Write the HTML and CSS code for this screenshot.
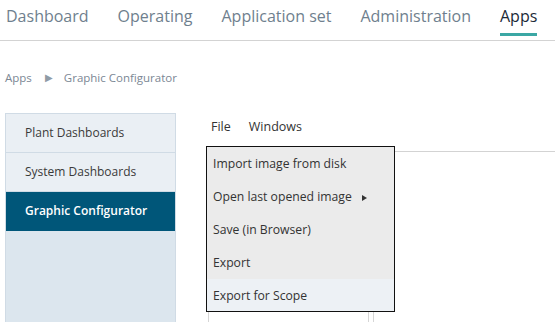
FILE: index.html
```html
<!DOCTYPE html>
<html lang="en">
<head>
<meta charset="utf-8">
<title>Graphic Configurator</title>
<link rel="stylesheet" href="styles.css">
</head>
<body>
<header class="topnav">
  <a class="nav-item">Dashboard</a>
  <a class="nav-item">Operating</a>
  <a class="nav-item">Application set</a>
  <a class="nav-item">Administration</a>
  <a class="nav-item active">Apps</a>
</header>
<nav class="breadcrumb">
  <span>Apps</span>
  <span class="crumb-sep">&#9654;</span>
  <span>Graphic Configurator</span>
</nav>
<div class="main">
  <aside class="sidebar">
    <div class="side-item">Plant Dashboards</div>
    <div class="side-item">System Dashboards</div>
    <div class="side-item active">Graphic Configurator</div>
  </aside>
  <section class="workspace">
    <div class="menubar">
      <span class="menu-title">File</span>
      <span class="menu-title">Windows</span>
    </div>
    <div class="canvas-area">
      <div class="panels">
        <div class="panel panel-a"></div>
        <div class="panel panel-b"></div>
      </div>
      <ul class="dropdown">
        <li class="dd-item">Import image from disk</li>
        <li class="dd-item">Open last opened image <span class="dd-arrow"></span></li>
        <li class="dd-item">Save (in Browser)</li>
        <li class="dd-item">Export</li>
        <li class="dd-item hover">Export for Scope</li>
      </ul>
    </div>
  </section>
</div>
</body>
</html>
```
FILE: styles.css
```css
* { box-sizing: border-box; }
html, body { margin: 0; padding: 0; }
body {
  font-family: "Open Sans", "Noto Sans", sans-serif;
  background: #fff;
  color: #333;
  width: 555px;
  height: 322px;
  overflow: hidden;
}
.topnav {
  display: flex;
  gap: 29px;
  height: 41px;
  padding-left: 6px;
  border-bottom: 1px solid #d3d3d3;
}
.nav-item {
  font-size: 16px;
  line-height: 20px;
  padding-top: 6px;
  height: 36px;
  color: #6f7f8e;
  border-bottom: 3px solid transparent;
  white-space: nowrap;
}
.nav-item.active {
  color: #1c2a38;
  border-bottom-color: #3ba7a4;
}
.breadcrumb {
  display: flex;
  align-items: center;
  height: 72px;
  padding-left: 5px;
  font-size: 11.5px;
  color: #7b8794;
}
.crumb-sep {
  font-size: 10px;
  margin: 0 11px 0 13px;
  color: #8f9ba6;
}
.main {
  display: flex;
  height: 209px;
}
.sidebar {
  width: 171px;
  margin-left: 5px;
  border: 1px solid #d0dbe5;
  border-bottom: none;
  background: #dce6ee;
}
.side-item {
  height: 39px;
  line-height: 38px;
  padding-left: 19px;
  font-size: 12px;
  color: #3a3a3a;
  background: #eaeff4;
  border-bottom: 1px solid #d0dbe5;
}
.side-item.active {
  background: #005679;
  color: #fff;
  font-weight: 600;
  border-bottom-color: #005679;
}
.workspace {
  flex: 1;
  padding-left: 30px;
  display: flex;
  flex-direction: column;
}
.menubar {
  display: flex;
  gap: 18px;
  height: 39px;
  padding-left: 5px;
  border-bottom: 1px solid #d3d3d3;
  font-size: 12.5px;
  line-height: 28px;
  color: #333;
}
.canvas-area {
  position: relative;
  flex: 1;
}
.panels {
  display: flex;
  height: 100%;
  padding-left: 2px;
  gap: 4px;
}
.panel-a {
  width: 161px;
  border-left: 1px solid #d6d6d6;
  border-right: 1px solid #d6d6d6;
}
.panel-b {
  flex: 1;
  border-left: 1px solid #d6d6d6;
}
.dropdown {
  position: absolute;
  top: -6px;
  left: 0;
  width: 189px;
  margin: 0;
  padding: 0;
  list-style: none;
  background: #ebebeb;
  border: 1px solid #111;
}
.dd-item {
  height: 33px;
  line-height: 33px;
  padding-left: 6px;
  font-size: 12.2px;
  color: #333;
  display: flex;
  align-items: center;
}
.dd-item.hover {
  background: #edf1f5;
  height: 32px;
}
.dd-arrow {
  width: 0;
  height: 0;
  margin-left: 10px;
  margin-top: 2px;
  border-top: 3px solid transparent;
  border-bottom: 3px solid transparent;
  border-left: 5px solid #333;
}
```
